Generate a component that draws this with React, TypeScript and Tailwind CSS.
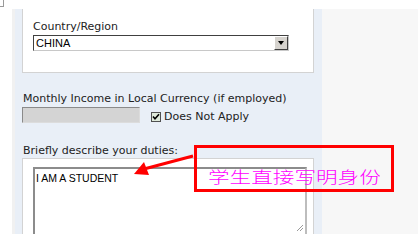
import React from "react";

export default function App() {
  const label = "font-['DejaVu_Sans',Verdana,sans-serif] text-[11px] leading-[14px] text-[#222]";
  return (
    <div className="relative w-[418px] h-[234px] overflow-hidden bg-white">
      <div className="relative h-[9px]">
        <div className="absolute left-0 top-0 w-[4px] h-[7px] border-r border-b border-[#9a9a9a]" />
      </div>
      <div className="flex h-[225px]">
        <div className="w-[12px] bg-white" />
        <div className="w-[3px] bg-[#f1f1f1]" />
        <div className="w-[307px] bg-[#e9eff7] pl-[7px] pr-[8px]">
          {/* card 1 */}
          <div className="w-[292px] h-[64px] bg-white border-x border-b border-[#d3d3d3] pl-[10px] pt-[11px]">
            <div className={label}>Country/Region</div>
            <div className="mt-[1px] flex w-[256px] h-[16px] border border-t-[#404040] border-l-[#404040] border-b-[#c8c8c8] border-r-[#c8c8c8] bg-white">
              <div className="flex-1 pl-[2px] font-['Liberation_Sans',Arial,sans-serif] text-[11px] leading-[14px] text-black">CHINA</div>
              <div className="w-[14px] h-[14px] bg-[#d6d3ce] border border-t-white border-l-white border-b-[#404040] border-r-[#404040] flex items-center justify-center">
                <div className="w-0 h-0 border-l-[3px] border-r-[3px] border-t-[4px] border-l-transparent border-r-transparent border-t-black" />
              </div>
            </div>
          </div>
          {/* monthly income */}
          <div className={`${label} mt-[19px] pl-[1px]`}>Monthly Income in Local Currency (if employed)</div>
          <div className="mt-[1px] flex items-center h-[16px]">
            <div className="w-[118px] h-[16px] bg-[#d4d4d4] border border-t-[#8a8a8a] border-l-[#8a8a8a] border-b-[#dcdcdc] border-r-[#dcdcdc]" />
            <div className="ml-[11px] mt-[4px] w-[10px] h-[10px] border border-[#505050] bg-[#dfeadb] flex items-center justify-center">
              <svg width="8" height="8" viewBox="0 0 8 8">
                <path d="M1 3.5 L3 5.8 L7 1.2" stroke="#000" strokeWidth="1.6" fill="none" />
              </svg>
            </div>
            <div className={`${label} ml-[3px] mt-[3px]`}>Does Not Apply</div>
          </div>
          {/* duties */}
          <div className={`${label} mt-[21px] pl-[1px]`}>Briefly describe your duties:</div>
          <div className="w-[292px] h-[80px] bg-white border-x border-t border-[#d3d3d3] pl-[10px] pt-[8px]">
            <div className="relative w-[274px] h-[70px] border-2 border-t-[#8c8c8c] border-l-[#8c8c8c] border-b-[#bdbdbd] border-r-[#bdbdbd] bg-white px-[1px] pt-[3px] font-['Liberation_Sans',Arial,sans-serif] text-[10.5px] leading-[12px] text-black">
              I AM A STUDENT
              <svg className="absolute right-[1px] bottom-[3px]" width="8" height="8" viewBox="0 0 8 8">
                <path d="M7 1 L1 7 M7 4 L4 7" stroke="#9a9a9a" strokeWidth="1" />
              </svg>
            </div>
          </div>
        </div>
        <div className="flex-1 bg-[#f7f7f7]" />
      </div>

      {/* annotation */}
      <div className="absolute left-[194px] top-[145px] w-[200px] h-[47px] border-[3px] border-[#ff0000]" />
      <div className="absolute left-[208px] top-[166px] origin-left scale-x-[1.35] font-['Noto_Sans_CJK_SC',sans-serif] font-light text-[16px] leading-[20px] text-[#ff00ff] whitespace-nowrap">
        学生直接写明身份
      </div>
      <svg className="absolute left-0 top-0" width="418" height="234" viewBox="0 0 418 234">
        <line x1="193" y1="156" x2="144" y2="169" stroke="#ff0000" strokeWidth="3" />
        <polygon points="134,174 144,162 149,175" fill="#ff0000" />
      </svg>
    </div>
  );
}
